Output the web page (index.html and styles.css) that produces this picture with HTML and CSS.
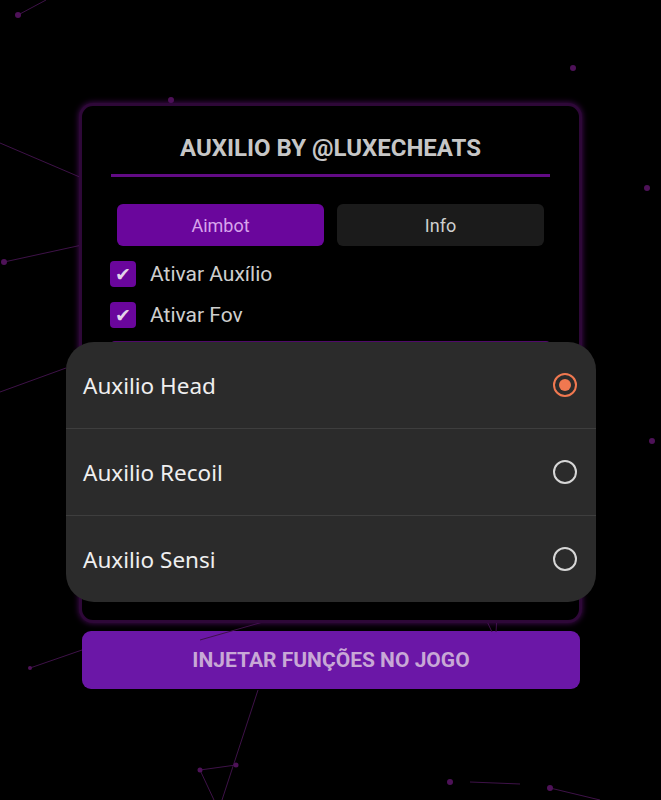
FILE: index.html
```html
<!DOCTYPE html>
<html lang="pt-BR">
<head>
<meta charset="UTF-8">
<meta name="viewport" content="width=device-width, initial-scale=1.0">
<title>Auxilio by @luxecheats</title>
<link rel="stylesheet" href="styles.css">
</head>
<body>

<div class="screen">
    <!-- particle network behind the menu -->
    <svg class="particles" width="661" height="800" viewBox="0 0 661 800">
        <g stroke="#3e1248" stroke-width="1" fill="none">
            <line x1="18" y1="15" x2="46" y2="0"/>
            <line x1="0" y1="143" x2="82" y2="178"/>
            <line x1="82" y1="178" x2="84" y2="196"/>
            <line x1="4" y1="262" x2="82" y2="245"/>
            <line x1="0" y1="392" x2="66" y2="368"/>
            <line x1="30" y1="668" x2="82" y2="650"/>
            <line x1="200" y1="640" x2="270" y2="620"/>
            <line x1="258" y1="690" x2="222" y2="800"/>
            <line x1="200" y1="770" x2="236" y2="765"/>
            <line x1="200" y1="770" x2="214" y2="800"/>
            <line x1="477" y1="600" x2="492" y2="632"/>
            <line x1="498" y1="600" x2="496" y2="632"/>
            <line x1="470" y1="782" x2="520" y2="784"/>
            <line x1="550" y1="788" x2="600" y2="800"/>
        </g>
        <g fill="#4e1258">
            <circle cx="18" cy="15" r="3"/>
            <circle cx="171" cy="100" r="3"/>
            <circle cx="573" cy="68" r="3"/>
            <circle cx="647" cy="188" r="3"/>
            <circle cx="4" cy="262" r="3"/>
            <circle cx="652" cy="441" r="3"/>
            <circle cx="30" cy="668" r="2"/>
            <circle cx="200" cy="770" r="2.5"/>
            <circle cx="236" cy="765" r="2.5"/>
            <circle cx="450" cy="782" r="3"/>
            <circle cx="550" cy="788" r="3"/>
        </g>
    </svg>

    <div class="panel">
        <h2 class="title">AUXILIO BY @LUXECHEATS</h2>

        <div class="tabs">
            <button class="tab active">Aimbot</button>
            <button class="tab">Info</button>
        </div>

        <label class="check">
            <span class="box">&#10004;</span>
            Ativar Auxílio
        </label>
        <label class="check">
            <span class="box">&#10004;</span>
            Ativar Fov
        </label>

        <div class="select-box"></div>
    </div>

    <button class="inject">INJETAR FUNÇÕES NO JOGO</button>

    <!-- open dropdown for the aim mode -->
    <div class="picker">
        <div class="option">
            <span>Auxilio Head</span>
            <span class="radio checked"></span>
        </div>
        <div class="option">
            <span>Auxilio Recoil</span>
            <span class="radio"></span>
        </div>
        <div class="option">
            <span>Auxilio Sensi</span>
            <span class="radio"></span>
        </div>
    </div>
</div>

</body>
</html>
```

FILE: styles.css
```css
body {
    margin: 0;
    padding: 0;
    background-color: #000;
    font-family: Roboto, "Liberation Sans", Arial, sans-serif;
}
.screen {
    position: relative;
    width: 661px;
    height: 800px;
    overflow: hidden;
    padding-top: 103px;
    box-sizing: border-box;
    display: flex;
    flex-direction: column;
    align-items: flex-start;
}
.particles {
    position: absolute;
    left: 0;
    top: 0;
}
.panel {
    position: relative;
    margin-left: 79px;
    width: 503px;
    box-sizing: border-box;
    padding: 27px 29px 14px 29px;
    border: 3px solid #2e0838;
    border-radius: 14px;
    background-color: #000;
    box-shadow: 0 0 6px #4a0c5c;
}
.title {
    margin: 0;
    text-align: center;
    font-size: 24px;
    line-height: 30px;
    font-weight: bold;
    color: #c6c6c6;
    padding-bottom: 11px;
    border-bottom: 3px solid #620b85;
}
.tabs {
    display: flex;
    gap: 13px;
    margin: 27px 6px 15px 6px;
}
.tab {
    flex: 1;
    height: 42px;
    border: none;
    border-radius: 6px;
    font-family: Roboto, "Liberation Sans", Arial, sans-serif;
    font-size: 18px;
    background-color: #1b1b1b;
    color: #cfcfcf;
}
.tab.active {
    background-color: #6a069c;
    color: #d8a4ec;
}
.check {
    display: flex;
    align-items: center;
    gap: 14px;
    height: 26px;
    margin: 0 0 15px -1px;
    font-size: 21px;
    color: #cecece;
}
.box {
    width: 26px;
    height: 26px;
    border-radius: 4px;
    background-color: #6a069c;
    color: #e2d4ea;
    font-size: 19px;
    display: flex;
    align-items: center;
    justify-content: center;
}
.select-box {
    margin-top: -2px;
    height: 262px;
    border-top: 3px solid #500a6a;
    border-radius: 4px;
}
.inject {
    margin: 8px 0 0 82px;
    width: 498px;
    height: 58px;
    border: none;
    border-radius: 9px;
    background-color: #6b17a7;
    color: #c8a8d6;
    font-family: Roboto, "Liberation Sans", Arial, sans-serif;
    font-size: 21px;
    font-weight: bold;
}
.picker {
    position: absolute;
    left: 66px;
    top: 342px;
    width: 530px;
    border-radius: 28px;
    background-color: #2b2b2b;
    overflow: hidden;
}
.option {
    display: flex;
    align-items: center;
    justify-content: space-between;
    height: 86px;
    padding: 0 19px 0 17px;
    font-family: "Noto Sans", "Open Sans", sans-serif;
    font-size: 22.5px;
    color: #efefef;
    border-bottom: 1px solid #3e3e3e;
}
.option:last-child {
    border-bottom: none;
}
.radio {
    width: 20px;
    height: 20px;
    border: 2.5px solid #d6d6d6;
    border-radius: 50%;
    position: relative;
}
.radio.checked {
    border-color: #f07850;
}
.radio.checked::after {
    content: "";
    position: absolute;
    left: 4px;
    top: 4px;
    width: 12px;
    height: 12px;
    border-radius: 50%;
    background-color: #f07850;
}
```
